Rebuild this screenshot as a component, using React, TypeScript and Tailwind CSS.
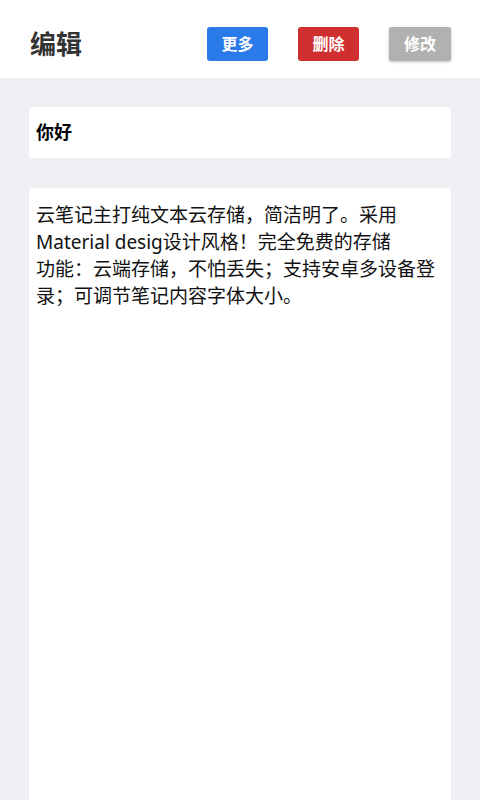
import React from "react";

export default function App() {
  const font = { fontFamily: '"Noto Sans", "Noto Sans CJK SC", sans-serif' };
  const lines: React.ReactNode[] = [
    <>云笔记主打纯文本云存储<C>，</C>简洁明了<C>。</C>采用</>,
    <>Material desig设计风格<C>！</C>完全免费的存储</>,
    <>功能<C>：</C>云端存储<C>，</C>不怕丢失<C>；</C>支持安卓多设备登</>,
    <>录<C>；</C>可调节笔记内容字体大小<C>。</C></>,
  ];
  return (
    <div className="w-[480px] h-[800px] bg-[#efeff4] flex flex-col overflow-hidden" style={font}>
      <div className="h-[78px] bg-white flex items-center pl-[30px] pr-[29px] pt-[9px] shrink-0">
        <div className="text-[26px] font-bold text-[#333333] flex-1 leading-none">编辑</div>
        <div className="flex gap-[30px]">
          <button className="w-[61px] h-[34px] rounded-[3px] bg-[#2a7ae9] text-white text-[16px] font-bold leading-none">更多</button>
          <button className="w-[61px] h-[34px] rounded-[3px] bg-[#d12f2f] text-white text-[16px] font-bold leading-none">删除</button>
          <button className="w-[62px] h-[34px] rounded-[3px] bg-[#b1b1b1] text-white text-[16px] font-bold leading-none shadow-[0_1px_3px_rgba(0,0,0,0.25)]">修改</button>
        </div>
      </div>
      <div className="flex flex-col px-[29px] pt-[29px] gap-[30px] flex-1">
        <div className="h-[51px] bg-white rounded-[4px] flex items-center px-[7px]">
          <span className="text-[18px] font-bold text-black">你好</span>
        </div>
        <div className="flex-1 bg-white rounded-t-[4px] px-[7px] pt-[13px]">
          <div className="text-[19px] leading-[26px] text-[#111111] whitespace-nowrap">
            {lines.map((l, i) => (
              <div key={i}>{l}</div>
            ))}
          </div>
        </div>
      </div>
    </div>
  );
}

function C({ children }: { children: React.ReactNode }) {
  return (
    <span className="inline-block w-[19px]" style={{ fontFamily: '"Noto Sans CJK SC", sans-serif' }}>
      {children}
    </span>
  );
}
